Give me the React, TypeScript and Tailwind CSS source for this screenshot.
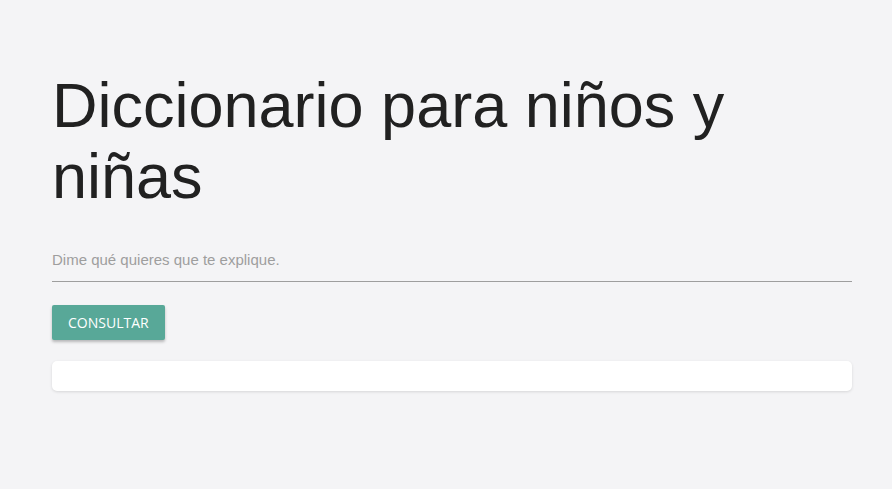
export default function App() {
  return (
    <div className="min-h-screen bg-[#f4f4f6] font-['Liberation_Sans',Arial,sans-serif]">
      <div className="pl-[52px] pr-[40px] pt-[70px]">
        <h1 className="text-[63px] leading-[71px] font-normal text-[#212121]">
          Diccionario para niños y niñas
        </h1>
        <div className="mt-[28px] h-[42px] border-b border-[#9e9e9e]">
          <input
            type="text"
            placeholder="Dime qué quieres que te explique."
            className="w-full h-full pb-[3px] bg-transparent text-[15px] text-[#212121] placeholder:text-[#9e9e9e] outline-none"
          />
        </div>
        <button className="mt-[23px] h-[35px] px-4 rounded-[2px] bg-[#58a898] text-white text-[14px] font-['Open_Sans',sans-serif] uppercase shadow-[0_2px_3px_rgba(0,0,0,0.25)]">
          Consultar
        </button>
        <div className="mt-[21px] h-[30px] rounded-[5px] bg-white shadow-[0_1px_3px_rgba(0,0,0,0.12)]" />
      </div>
    </div>
  );
}
